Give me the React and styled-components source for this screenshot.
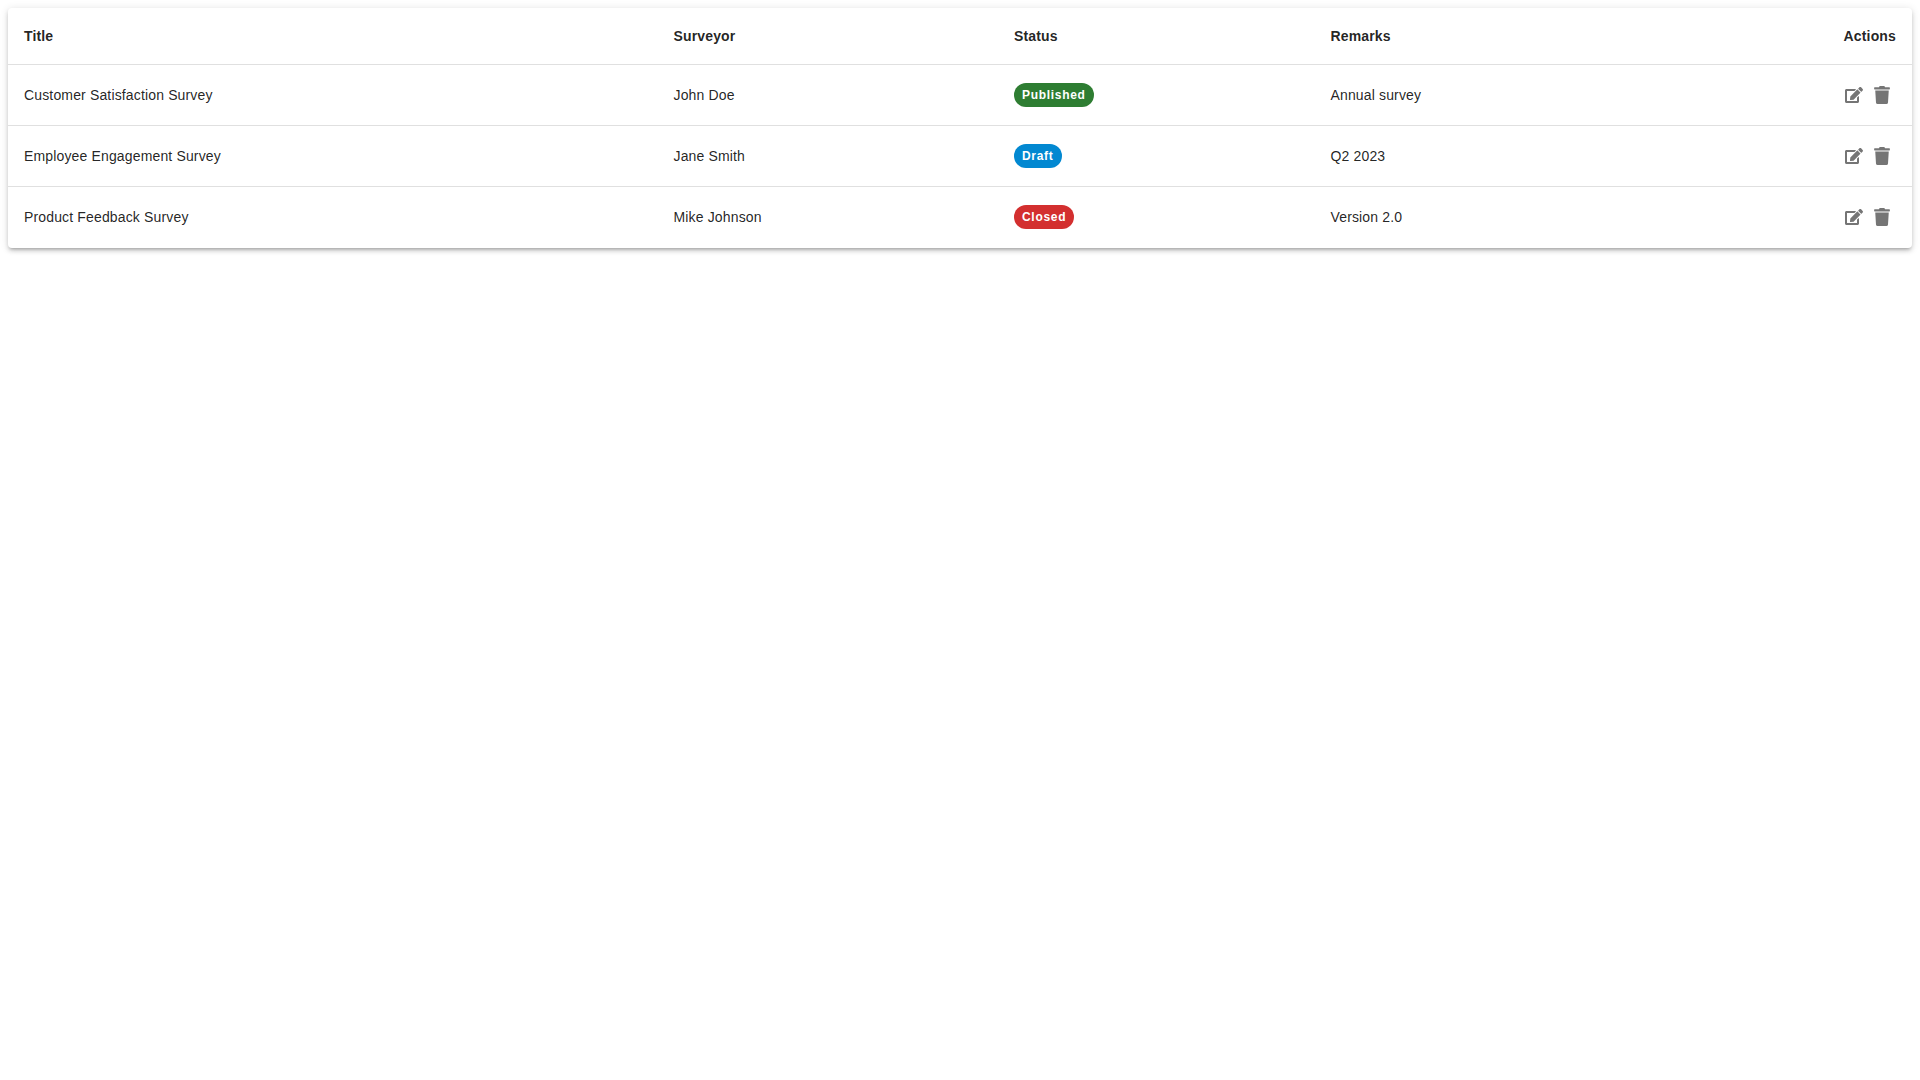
import { createGlobalStyle, styled } from "styled-components";
import { FaEdit, FaTrash } from "react-icons/fa";

const surveys = [
  { title: "Customer Satisfaction Survey", surveyor: "John Doe", status: "Published", remarks: "Annual survey" },
  { title: "Employee Engagement Survey", surveyor: "Jane Smith", status: "Draft", remarks: "Q2 2023" },
  { title: "Product Feedback Survey", surveyor: "Mike Johnson", status: "Closed", remarks: "Version 2.0" },
];

const statusColors = {
  Published: "#2e7d32",
  Draft: "#0288d1",
  Closed: "#d32f2f",
};

const App = () => {
  return (
    <>
      <GlobalStyle />
      <Paper>
        <Table>
          <colgroup>
            <col width="649.5" />
            <col width="340.5" />
            <col width="316.5" />
            <col width="297" />
            <col width="300.5" />
          </colgroup>
          <thead>
            <tr>
              <HeadCell>Title</HeadCell>
              <HeadCell>Surveyor</HeadCell>
              <HeadCell>Status</HeadCell>
              <HeadCell>Remarks</HeadCell>
              <HeadCell $right>Actions</HeadCell>
            </tr>
          </thead>
          <tbody>
            {surveys.map((survey) => (
              <Row key={survey.title}>
                <Cell>{survey.title}</Cell>
                <Cell>{survey.surveyor}</Cell>
                <Cell>
                  <Chip $color={statusColors[survey.status]}>{survey.status}</Chip>
                </Cell>
                <Cell>{survey.remarks}</Cell>
                <Cell $right>
                  <Actions>
                    <IconButton aria-label="edit">
                      <FaEdit size={18} />
                    </IconButton>
                    <IconButton aria-label="delete">
                      <FaTrash size={18} />
                    </IconButton>
                  </Actions>
                </Cell>
              </Row>
            ))}
          </tbody>
        </Table>
      </Paper>
    </>
  );
};

const GlobalStyle = createGlobalStyle`
  body {
    margin: 0;
    background: #fff;
    font-family: "Liberation Sans", Arial, sans-serif;
  }
  #root {
    padding: 8px;
  }
`;

const Paper = styled.div`
  position: relative;
  border-radius: 4px;
  background: #fff;
  box-shadow: 0 3px 3px -2px rgba(0, 0, 0, 0.2), 0 3px 4px 0 rgba(0, 0, 0, 0.14), 0 1px 8px 0 rgba(0, 0, 0, 0.12);
`;

const Table = styled.table`
  width: 100%;
  table-layout: fixed;
  border-collapse: separate;
  border-spacing: 0;
`;

const HeadCell = styled.th`
  height: 57px;
  box-sizing: border-box;
  padding: 16px;
  font-size: 14px;
  font-weight: 700;
  line-height: 24px;
  letter-spacing: 0.15px;
  color: rgba(0, 0, 0, 0.87);
  text-align: ${(p) => (p.$right ? "right" : "left")};
  border-bottom: 1px solid #e0e0e0;
`;

const Row = styled.tr`
  &:last-child td {
    border-bottom-color: transparent;
  }
`;

const Cell = styled.td`
  height: 61px;
  box-sizing: border-box;
  padding: 16px;
  font-size: 14px;
  line-height: 20px;
  letter-spacing: 0.15px;
  color: rgba(0, 0, 0, 0.87);
  text-align: ${(p) => (p.$right ? "right" : "left")};
  border-bottom: 1px solid #e0e0e0;
`;

const Chip = styled.span`
  display: inline-flex;
  align-items: center;
  height: 24px;
  padding: 0 8px;
  border-radius: 12px;
  background: ${(p) => p.$color};
  color: #fff;
  font-size: 12px;
  font-weight: 700;
  letter-spacing: 0.7px;
  vertical-align: middle;
`;

const Actions = styled.div`
  display: flex;
  justify-content: flex-end;
  align-items: center;
`;

const IconButton = styled.button`
  display: inline-flex;
  align-items: center;
  justify-content: center;
  box-sizing: border-box;
  width: 28px;
  height: 28px;
  padding: 5px;
  border: 0;
  background: none;
  color: #757575;
`;

export default App;
